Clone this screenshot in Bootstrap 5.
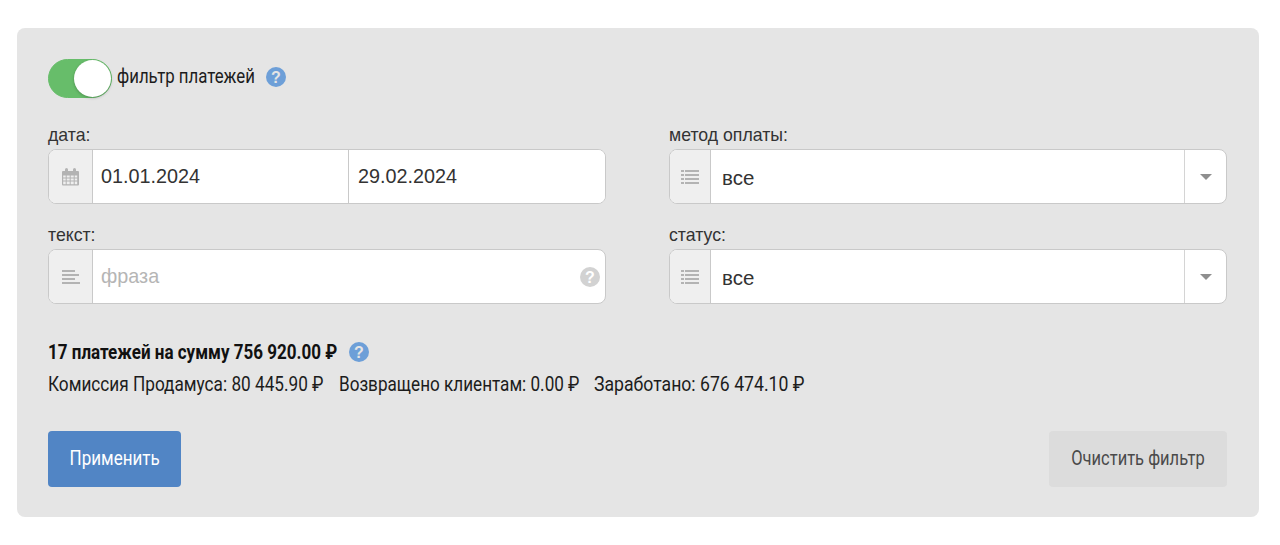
<!DOCTYPE html>
<html lang="en">

<head>
    <meta charset="UTF-8">
    <meta name="viewport" content="width=device-width, initial-scale=1.0">
    <title>Фильтр платежей</title>
    <link href="https://cdn.jsdelivr.net/npm/bootstrap@5.3.2/dist/css/bootstrap.min.css" rel="stylesheet">
    <style>
        body {
            background-color: #fff;
            font-family: "Liberation Sans", sans-serif;
            padding: 28px 21px 0 17px;
        }

        .filter-panel {
            background-color: #e5e5e5;
            border-radius: 8px;
            height: 489px;
            padding: 31px 32px 30px 31px;
        }

        /* no narrow font installed, so Roboto is squeezed to the width of the original */
        .narrow-text {
            display: inline-block;
            font-family: "Roboto", sans-serif;
            color: #1c1c1c;
            white-space: nowrap;
            transform: scaleX(.81);
            transform-origin: left center;
        }

        .switch-row {
            height: 39px;
            margin-bottom: 28px;
        }

        .filter-switch {
            width: 64px;
            height: 39px;
            border-radius: 20px;
            background-color: #67bd6a;
            border: 1px solid #67bd6a;
            position: relative;
            flex-shrink: 0;
        }

        .filter-switch::after {
            content: "";
            position: absolute;
            top: 0;
            right: 0;
            width: 37px;
            height: 37px;
            border-radius: 50%;
            background: #fff;
            box-shadow: 0 1px 3px rgba(0, 0, 0, .25);
        }

        .switch-label {
            font-size: 21px;
            width: 138px;
            margin-left: 5px;
            margin-right: 11px;
            margin-bottom: 3px;
            transform: scaleX(.8);
        }

        .hint-icon {
            flex-shrink: 0;
        }

        .switch-row .hint-icon {
            margin-bottom: 3px;
        }

        .filter-grid {
            display: grid;
            grid-template-columns: 558px 558px;
            column-gap: 63px;
            row-gap: 22px;
        }

        .field-label {
            display: block;
            font-size: 17.7px;
            line-height: 18px;
            color: #333;
            margin-bottom: 5px;
        }

        .filter-group {
            height: 55px;
            border: 1px solid #c9c9c9;
            border-radius: 8px;
            background: #fff;
            display: flex;
            overflow: hidden;
        }

        .filter-group .addon {
            width: 44px;
            background: #efefef;
            border-right: 1px solid #c9c9c9;
            display: flex;
            align-items: center;
            justify-content: center;
            flex-shrink: 0;
        }

        .filter-group .addon-select {
            width: 41px;
        }

        .filter-group .form-control {
            border: 0;
            border-radius: 0;
            font-size: 19.8px;
            color: #333;
            padding: 0 8px;
            height: 100%;
            box-shadow: none;
        }

        .filter-group .form-control::placeholder {
            color: #b5b5b5;
        }

        .filter-group .date-end {
            flex: 0 0 257px;
            border-left: 1px solid #c9c9c9;
            padding-left: 9px;
        }

        .select-value {
            flex-grow: 1;
            font-size: 20.5px;
            color: #333;
            padding-left: 11px;
            display: flex;
            align-items: center;
            padding-top: 4px;
        }

        .select-arrow {
            width: 42px;
            border-left: 1px solid #d4d4d4;
            display: flex;
            align-items: center;
            justify-content: center;
        }

        .select-arrow::after {
            content: "";
            border-left: 6px solid transparent;
            border-right: 6px solid transparent;
            border-top: 6px solid #8f8f8f;
        }

        .hint-inside {
            display: flex;
            align-items: center;
            padding-right: 5px;
        }

        .summary-block {
            margin-top: 32px;
        }

        .summary-total {
            height: 32px;
        }

        .total-text {
            font-size: 21px;
            font-weight: 700;
            line-height: 32px;
            color: #111;
            width: 289px;
            margin-right: 12px;
        }

        .summary-line {
            font-size: 21px;
            line-height: 32px;
            white-space: nowrap;
        }

        .summary-fee {
            width: 276px;
            margin-right: 15px;
            transform: scaleX(.819);
        }

        .summary-refund {
            width: 240px;
            margin-right: 15px;
            transform: scaleX(.815);
        }

        .summary-earned {
            transform: scaleX(.84);
        }

        .btn-apply,
        .btn-clear {
            height: 56px;
            font-family: "Roboto", sans-serif;
            font-size: 21px;
            border: 0;
            border-radius: 4px;
            padding: 0;
            white-space: nowrap;
        }

        .btn-apply span,
        .btn-clear span {
            display: inline-block;
            transform: scaleX(.81);
        }

        .btn-clear span {
            transform: scaleX(.785);
        }

        .btn-apply {
            width: 133px;
            background: #5185c5;
            color: #fff;
        }

        .btn-clear {
            width: 178px;
            background: #dcdcdc;
            color: #4a4a4a;
        }

        .action-row {
            margin-top: 31px;
        }
    </style>
</head>

<body>
    <div class="filter-panel">
        <div class="switch-row d-flex align-items-center">
            <div class="filter-switch"></div>
            <span class="switch-label narrow-text">фильтр платежей</span>
            <svg class="hint-icon" width="20" height="20" viewBox="0 0 20 20">
                <circle cx="10" cy="10" r="10" fill="#6d9fd8" />
                <text x="10" y="15.500" text-anchor="middle" font-family="Liberation Sans" font-weight="700" font-size="16" fill="#e5e5e5">?</text>
            </svg>
        </div>

        <div class="filter-grid">
            <div>
                <label class="field-label">дата:</label>
                <div class="filter-group">
                    <div class="addon">
                        <svg width="17" height="18" viewBox="0 0 17 18" fill="#b3b3b3">
                            <path d="M1 3h2V1.500a1 1 0 0 1 3 0V3h5V1.500a1 1 0 0 1 3 0V3h2a1 1 0 0 1 1 1v12.500a1 1 0 0 1-1 1H1a1 1 0 0 1-1-1V4a1 1 0 0 1 1-1zm.2 4.500v2h2.500v-2zm3.500 0v2h3v-2zm4 0v2h3v-2zm4 0v2h2.500v-2zm-11.500 3v2h2.500v-2zm3.500 0v2h3v-2zm4 0v2h3v-2zm4 0v2h2.500v-2zm-11.500 3v2.800h2.500v-2.800zm3.500 0v2.800h3v-2.800zm4 0v2.800h3v-2.800zm4 0v2.800h2.500v-2.800z" fill-rule="evenodd" />
                        </svg>
                    </div>
                    <input type="text" class="form-control" value="01.01.2024">
                    <input type="text" class="form-control date-end" value="29.02.2024">
                </div>
            </div>
            <div>
                <label class="field-label">метод оплаты:</label>
                <div class="filter-group">
                    <div class="addon addon-select">
                        <svg width="18" height="14" viewBox="0 0 18 14" fill="#b3b3b3">
                            <path d="M0 0h3v2H0zm4 0h14v2H4zM0 4h3v2H0zm4 0h14v2H4zM0 8h3v2H0zm4 0h14v2H4zM0 12h3v2H0zm4 0h14v2H4z" />
                        </svg>
                    </div>
                    <div class="select-value">все</div>
                    <div class="select-arrow"></div>
                </div>
            </div>
            <div>
                <label class="field-label">текст:</label>
                <div class="filter-group">
                    <div class="addon">
                        <svg width="18" height="14" viewBox="0 0 18 14" fill="#b3b3b3">
                            <path d="M0 0h13v2H0zM0 4h17v2H0zM0 8h13v2H0zM0 12h18v2H0z" />
                        </svg>
                    </div>
                    <input type="text" class="form-control" placeholder="фраза">
                    <div class="hint-inside">
                        <svg width="20" height="20" viewBox="0 0 20 20">
                            <circle cx="10" cy="10" r="10" fill="#d2d2d2" />
                            <text x="10" y="15.500" text-anchor="middle" font-family="Liberation Sans" font-weight="700" font-size="16" fill="#fff">?</text>
                        </svg>
                    </div>
                </div>
            </div>
            <div>
                <label class="field-label">статус:</label>
                <div class="filter-group">
                    <div class="addon addon-select">
                        <svg width="18" height="14" viewBox="0 0 18 14" fill="#b3b3b3">
                            <path d="M0 0h3v2H0zm4 0h14v2H4zM0 4h3v2H0zm4 0h14v2H4zM0 8h3v2H0zm4 0h14v2H4zM0 12h3v2H0zm4 0h14v2H4z" />
                        </svg>
                    </div>
                    <div class="select-value">все</div>
                    <div class="select-arrow"></div>
                </div>
            </div>
        </div>

        <div class="summary-block">
            <div class="summary-total d-flex align-items-center">
                <span class="total-text narrow-text">17 платежей на сумму 756 920.00 ₽</span>
                <svg class="hint-icon" width="20" height="20" viewBox="0 0 20 20">
                    <circle cx="10" cy="10" r="10" fill="#6d9fd8" />
                    <text x="10" y="15.500" text-anchor="middle" font-family="Liberation Sans" font-weight="700" font-size="16" fill="#e5e5e5">?</text>
                </svg>
            </div>
            <div class="summary-line">
                <span class="narrow-text summary-fee">Комиссия Продамуса: 80 445.90 ₽</span><span class="narrow-text summary-refund">Возвращено клиентам: 0.00 ₽</span><span class="narrow-text summary-earned">Заработано: 676 474.10 ₽</span>
            </div>
        </div>

        <div class="action-row d-flex justify-content-between">
            <button type="button" class="btn btn-apply"><span>Применить</span></button>
            <button type="button" class="btn btn-clear"><span>Очистить фильтр</span></button>
        </div>
    </div>

    <script src="https://cdn.jsdelivr.net/npm/bootstrap@5.3.2/dist/js/bootstrap.bundle.min.js"></script>
</body>

</html>
